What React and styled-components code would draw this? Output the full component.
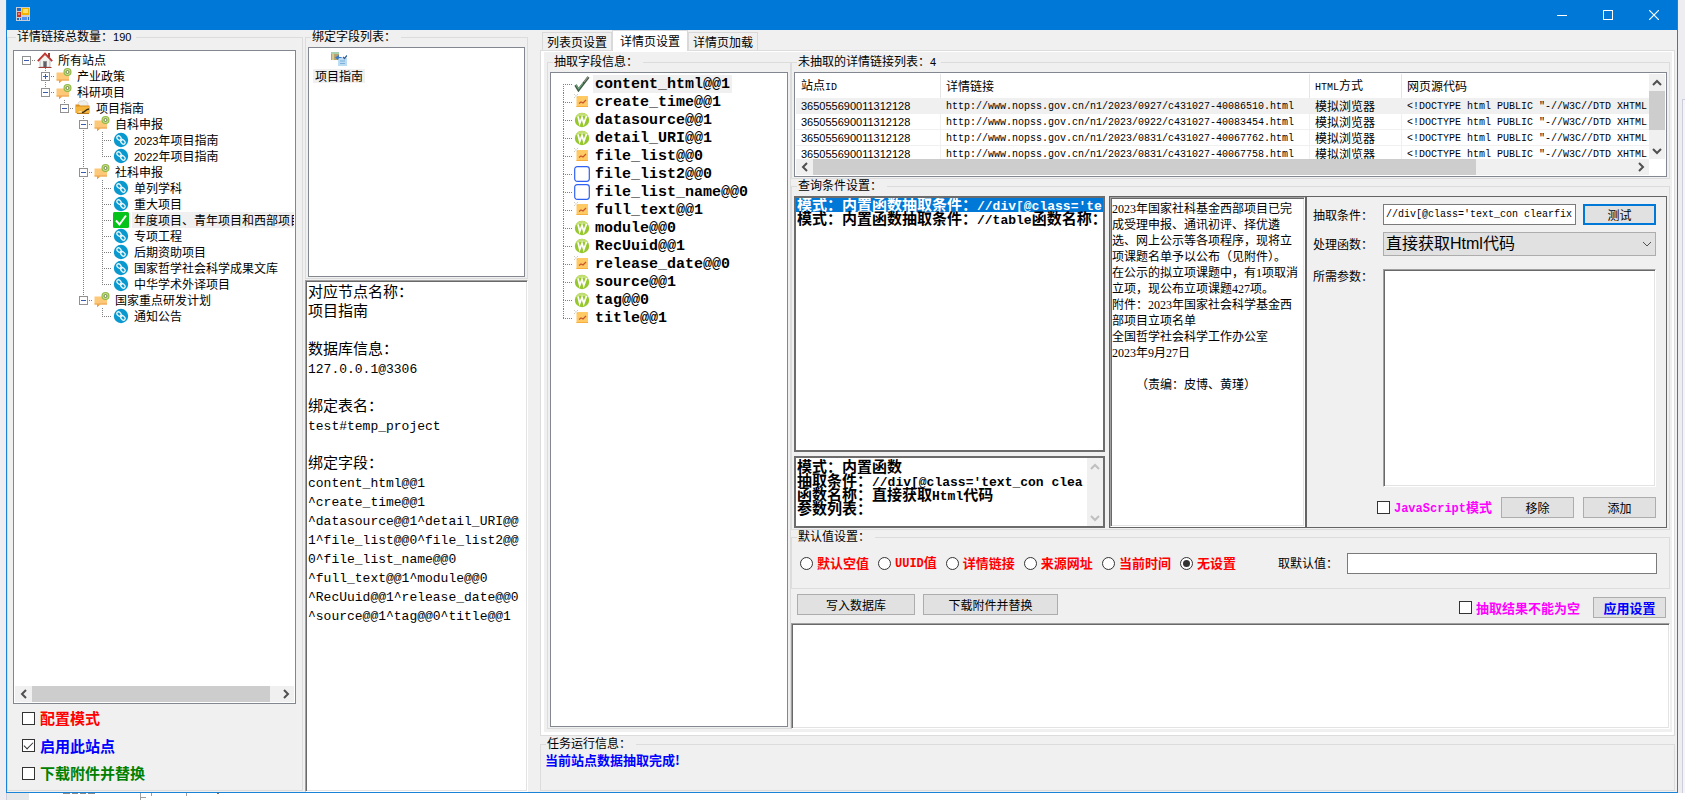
import React, { useState } from "react";
import styled, { createGlobalStyle, css } from "styled-components";

const CJK = '"Noto Sans CJK SC", sans-serif';

const GlobalStyle = createGlobalStyle`
  *, *::before, *::after { box-sizing: border-box; }
  html, body { margin: 0; padding: 0; overflow: hidden; }
  body { background: #eeeef2; color: #000; font: 12px/16px ${CJK}; }
  input, button, select, textarea { font: inherit; color: inherit; margin: 0; border-radius: 0; }
  ul, ol { list-style: none; margin: 0; padding: 0; }
`;

/* ---------- text ---------- */

const LATIN_SIZE = { 12: 10, 13: 12, 15: 13, 16: 13 };

const Latin = styled.span`
  font-family: "Liberation Mono", monospace;
  font-size: ${(p) => LATIN_SIZE[p.$size]}px;
  white-space: pre;
`;
const Digits = styled.span`
  font-family: "Liberation Sans", sans-serif;
  font-size: 11px;
`;

/* Full-width glyphs keep the parent's font, half-width runs are set at half its pitch. */
function Mixed({ size = 12, children }) {
  return String(children)
    .split(/([\x20-\x7e]+)/)
    .map((run, i) => {
      if (i % 2 === 0) return run;
      if (size === 12 && /^\d+$/.test(run)) return <Digits key={i}>{run}</Digits>;
      return <Latin key={i} $size={size}>{run}</Latin>;
    });
}

/* ---------- frame ---------- */

const Desktop = styled.div`
  height: 100vh;
  display: grid;
  grid-template-columns: 6px minmax(0, 1fr) 7px;
  grid-template-rows: minmax(0, 1fr) 7px;
`;

const WindowFrame = styled.main`
  grid-column: 2;
  display: flex;
  flex-direction: column;
  min-width: 0;
  background: #f0f0f0;
  border: 1px solid #1883d7;
  border-top: 0;
`;

const SideStrip = styled.div`
  margin: 99px 0 0 4px;
  border: solid #cccedb;
  border-width: 1px 0 0 1px;
  background: #f5f5f7;
`;

const BackStrip = styled.div`
  grid-column: 1 / -1;
  display: flex;
  background: #fff;
`;
const BackMargin = styled.div`
  width: ${(p) => p.$w}px;
  background: ${(p) => p.$bg};
  border-right: ${(p) => (p.$line ? "1px solid #cccedb" : "0")};
`;

const TitleBar = styled.header`
  height: 30px;
  flex: none;
  display: flex;
  align-items: center;
  justify-content: space-between;
  padding-left: 8px;
  background: #0078d7;
`;

const CaptionButtons = styled.div`
  display: flex;
`;
const CaptionButton = styled.button`
  width: 46px;
  height: 30px;
  padding: 0;
  border: 0;
  background: none;
  display: grid;
  place-items: center;
`;

const Body = styled.div`
  flex: 1;
  min-height: 0;
  display: flex;
`;

const Column = styled.section`
  display: flex;
  flex-direction: column;
  min-width: 0;
`;
const SiteColumn = styled(Column)`
  width: 296px;
  margin-right: 2px;
  padding-bottom: 1px;
`;
const BindColumn = styled(Column)`
  width: 223px;
  margin-right: 12px;
`;
const WorkColumn = styled(Column)`
  flex: 1;
  padding: 0 2px 1px 0;
`;

const Group = styled.fieldset`
  display: flex;
  flex-direction: column;
  min-width: 0;
  min-height: 0;
  margin: 0;
  padding: ${(p) => p.$pad || "3px 2px 1px"};
  border: 1px solid #dcdcdc;
  flex: ${(p) => (p.$h ? `0 0 ${p.$h}px` : "1")};
`;
const Legend = styled.legend`
  height: 14px;
  line-height: 12px;
  margin-left: 3px;
  padding: 0 5px 0 1px;
`;

const boxFrame = css`
  background: #fff;
  border: 1px solid #828790;
`;
const sunken = css`
  background: #fff;
  border: 1px solid;
  border-color: #a0a0a0 #fff #fff #a0a0a0;
  box-shadow: inset 1px 1px 0 #696969, inset -1px -1px 0 #e3e3e3;
`;

/* ---------- scroll bars ---------- */

const Bar = styled.div`
  flex: none;
  display: flex;
  background: #f0f0f0;
  ${(p) =>
    p.$v
      ? css`flex-direction: column; width: 16px;`
      : css`height: 16px;`}
`;
const BarEnd = styled.button`
  flex: 0 0 17px;
  padding: 0;
  border: 0;
  background: none;
  display: grid;
  place-items: center;
`;
const Track = styled.div`
  flex: 1;
  display: flex;
  flex-direction: ${(p) => (p.$v ? "column" : "row")};
`;
const Thumb = styled.div`
  background: #cdcdcd;
`;

const CHEVRONS = {
  left: "M7 1 3 5l4 4",
  right: "M3 1l4 4-4 4",
  up: "M1 7l4-4 4 4",
  down: "M1 3l4 4 4-4",
};
function Chevron({ dir, color = "#505050", width = 2 }) {
  return (
    <svg width="10" height="10" viewBox="0 0 10 10" aria-hidden="true">
      <path d={CHEVRONS[dir]} fill="none" stroke={color} strokeWidth={width} />
    </svg>
  );
}
function ScrollBar({ vertical, part, color }) {
  return (
    <Bar $v={vertical}>
      <BarEnd aria-label="back"><Chevron dir={vertical ? "up" : "left"} color={color} /></BarEnd>
      <Track $v={vertical}>
        {part ? <Thumb style={{ flexBasis: part + "%" }} /> : null}
      </Track>
      <BarEnd aria-label="forward"><Chevron dir={vertical ? "down" : "right"} color={color} /></BarEnd>
    </Bar>
  );
}

/* ---------- icons ---------- */

function Icon({ name, size = 16 }) {
  return (
    <svg width={size} height={size} viewBox="0 0 16 16" aria-hidden="true">
      {ICONS[name]}
    </svg>
  );
}

const ICONS = {
  app: (
    <>
      <rect x="1" y="0" width="14" height="14" fill="#c9ced6" />
      <rect x="2" y="1" width="4" height="3" fill="#1f66c7" />
      <rect x="2" y="5" width="4" height="5" fill="#c3332a" />
      <rect x="3" y="6" width="2" height="2" fill="#e8857a" />
      <rect x="7" y="1" width="7" height="7" fill="#f0b400" />
      <rect x="8" y="2" width="5" height="4" fill="#ffe06a" />
      <rect x="2" y="11" width="2" height="2" fill="#1f66c7" />
      <rect x="5" y="11" width="1" height="2" fill="#1f66c7" />
      <rect x="7" y="10" width="5" height="3" fill="#4f8ff0" />
      <rect x="13" y="10" width="1" height="3" fill="#1f66c7" />
    </>
  ),
  home: (
    <>
      <path d="M3 8 8 3l5 5v7H3z" fill="#f1f1ee" stroke="#9a9a9a" strokeWidth=".6" />
      <rect x="11" y="1" width="2" height="4" fill="#9a3b33" />
      <path d="M.8 9.200 8 1.600l7.200 7.600" fill="none" stroke="#b9312b" strokeWidth="1.800" />
      <path d="M3 8 8 2.700 13 8" fill="none" stroke="#ef8a80" strokeWidth=".6" />
      <rect x="6" y="9" width="4" height="6" fill="#8e8e90" />
      <rect x="7" y="10" width="2" height="5" fill="#5d6066" />
      <path d="M1.500 15.500h13" stroke="#a23c34" />
    </>
  ),
  note: (
    <>
      <path d="M.5 4.500h12.500v8H6L3 15.300V12.500H.5z" fill="#fdc878" />
      <path d="M.5 11.500h12.500v1H.5z" fill="#eaa04a" />
      <path d="M3 12.500h3l-3 2.800z" fill="#e89a3e" />
      <circle cx="11.500" cy="4" r="4" fill="#8fb944" />
      <circle cx="11.500" cy="4" r="2.900" fill="#c9e08c" />
      <circle cx="11.500" cy="4" r="1.500" fill="#fff" stroke="#55702c" strokeWidth=".8" />
    </>
  ),
  folder: (
    <>
      <path d="M3 3 5 1h3l1-1 4 3v4H3z" fill="#eeeeea" stroke="#cfcfc8" strokeWidth=".6" />
      <path d="M.5 4.500h3.500l1 1h9.500V13H.5z" fill="#d98e1f" />
      <path d="M.5 6.500h14.500L14 13.500H1.500z" fill="#f6b53c" />
      <path d="M7 12.500c3 .3 3-3 7-3.500" fill="none" stroke="#3b2c16" strokeWidth="1.500" />
      <path d="m3.500 12 3-.3" stroke="#fff3cf" />
      <path d="M2 13.500h12" stroke="#b5761a" />
    </>
  ),
  link: (
    <>
      <circle cx="8" cy="8" r="7.200" fill="#0a99cf" />
      <g transform="rotate(45 8 8)" fill="none" stroke="#e8f6fb" strokeWidth="1.300">
        <rect x="2.800" y="6.300" width="5" height="3.400" rx="1.700" />
        <rect x="8.200" y="6.300" width="5" height="3.400" rx="1.700" />
        <path d="M6.500 8h3" />
      </g>
    </>
  ),
  done: (
    <>
      <rect x="0" y="0" width="16" height="16" rx="1.500" fill="#05c31a" />
      <path d="M3 8.500 6.500 12.500 13 3.500" fill="none" stroke="#fff" strokeWidth="1.900" />
    </>
  ),
  database: (
    <>
      <path d="M0 1h8v8H0z" fill="#b7a46c" />
      <rect x="0" y="1" width="8" height="2" fill="#a9cfae" />
      <path d="M2 3v6" stroke="#e2d6a4" strokeWidth="1.500" />
      <path d="M4 6.500 8 4v2c4 0 5 2 4.500 5C11.500 9 10.500 8.500 8 8.500V10z" fill="#3a7bc8" />
      <path d="M8 7h8v8H7V9z" fill="#bcdcf2" />
      <path d="M9 10h5M9 12.500h5" stroke="#7db0dc" />
      <path d="m12 6 1.500 1.500L16 4.500" fill="none" stroke="#2f5d8f" strokeWidth="1.200" />
    </>
  ),
  tick: (
    <>
      <path d="m1.500 9 3 5L14.500 1" fill="none" stroke="#3f5c45" strokeWidth="2.600" />
      <path d="m2 9 2.700 3.800L9 7" fill="none" stroke="#6fa57c" strokeWidth="1.200" />
      <path d="M10 6 14 1" stroke="#9c9a8c" strokeWidth="1.200" />
    </>
  ),
  chart: (
    <>
      <rect x="2.500" y="2" width="11.500" height="11" fill="#ffc964" />
      <path d="M2.500 12.500H14" stroke="#f5ae3c" />
      <path d="m5 9.500 2-1.500 2 1 3-3" fill="none" stroke="#c8562a" strokeWidth="1.200" />
      <path d="m0 0 4 4M4 0 0 4" stroke="#c9c3b6" strokeWidth=".9" />
      <rect x="1.300" y="1.300" width="1.500" height="1.500" fill="#fff" />
    </>
  ),
  word: (
    <>
      <circle cx="8" cy="8" r="7.200" fill="#96c72c" />
      <path d="M1.500 5.500a7 7 0 0 1 13 0C11 3.500 5 3.500 1.500 5.500" fill="#c3df74" />
      <path d="m4 4.500 1.700 7 2.300-6 1.800 6L12.500 4" fill="none" stroke="#fff" strokeWidth="1.700" />
    </>
  ),
  blank: <rect x=".7" y=".7" width="14.600" height="14.600" rx="2.500" fill="#fff" stroke="#2f62f0" strokeWidth="1.200" />,
};

/* ---------- trees ---------- */

const TreeBox = styled.div`
  ${boxFrame}
  flex: 1;
  min-height: 0;
  display: flex;
  flex-direction: column;
  padding: 1px;
`;
const TreeRows = styled.ul`
  flex: 1;
  min-height: 0;
  overflow: hidden;
  padding: ${(p) => p.$top || 0}px 0 0 2px;
`;
const TreeRow = styled.li`
  display: flex;
  align-items: center;
  height: ${(p) => p.$h}px;
  white-space: nowrap;
  > svg { flex: none; }
`;
const IconSlot = styled.span`
  flex: none;
  width: 16px;
  height: 16px;
  margin: 0 3px 0 1px;
`;
const NodeLabel = styled.span`
  padding: 0 2px;
  line-height: 16px;
  background: ${(p) => (p.$on ? "#f0f0f0" : "none")};
`;
const FieldLabel = styled(NodeLabel)`
  padding-top: 2px;
  font: bold 15px/16px "Liberation Mono", monospace;
`;

function Guide({ h = 16, up, down, across, box }) {
  const mid = h / 2;
  const dots = { stroke: "#808080", strokeDasharray: "1 1" };
  return (
    <svg width="19" height={h} viewBox={`0 0 19 ${h}`} aria-hidden="true">
      {up && <path d={`M9.500 0V${mid}`} {...dots} />}
      {down && <path d={`M9.500 ${mid}V${h}`} {...dots} />}
      {across && <path d={`M9 ${mid + 0.5}H19`} {...dots} />}
      {box && (
        <>
          <rect x="5.500" y="4.500" width="8" height="8" fill="#fff" stroke="#919191" />
          <path d="M7 8.500h5" stroke="#3a5ba8" />
          {box === "+" && <path d="M9.500 6v5" stroke="#3a5ba8" />}
        </>
      )}
    </svg>
  );
}

/* depth, label, icon, expander, last sibling */
const SITES = [
  [0, "所有站点", "home", "-", true],
  [1, "产业政策", "note", "+", false],
  [1, "科研项目", "note", "-", true],
  [2, "项目指南", "folder", "-", true],
  [3, "自科申报", "note", "-", false],
  [4, "2023年项目指南", "link", "", false],
  [4, "2022年项目指南", "link", "", true],
  [3, "社科申报", "note", "-", false],
  [4, "单列学科", "link", "", false],
  [4, "重大项目", "link", "", false],
  [4, "年度项目、青年项目和西部项目", "done", "", false],
  [4, "专项工程", "link", "", false],
  [4, "后期资助项目", "link", "", false],
  [4, "国家哲学社会科学成果文库", "link", "", false],
  [4, "中华学术外译项目", "link", "", true],
  [3, "国家重点研发计划", "note", "-", true],
  [4, "通知公告", "link", "", true],
];

function SiteTree() {
  const open = [];
  return (
    <TreeRows role="tree">
      {SITES.map(([depth, label, icon, box, last]) => {
        open[depth] = !last;
        return (
          <TreeRow key={label} $h={16} role="treeitem">
            {Array.from({ length: depth }, (_, d) => (
              <Guide key={d} up={open[d]} down={open[d]} />
            ))}
            <Guide up={depth > 0} down={!last} across box={box} />
            <IconSlot><Icon name={icon} /></IconSlot>
            <NodeLabel $on={icon === "done"}><Mixed>{label}</Mixed></NodeLabel>
          </TreeRow>
        );
      })}
    </TreeRows>
  );
}

const FIELDS = [
  ["content_html@@1", "tick"],
  ["create_time@@1", "chart"],
  ["datasource@@1", "word"],
  ["detail_URI@@1", "word"],
  ["file_list@@0", "chart"],
  ["file_list2@@0", "blank"],
  ["file_list_name@@0", "blank"],
  ["full_text@@1", "chart"],
  ["module@@0", "word"],
  ["RecUuid@@1", "word"],
  ["release_date@@0", "chart"],
  ["source@@1", "word"],
  ["tag@@0", "word"],
  ["title@@1", "chart"],
];

function FieldTree() {
  return (
    <TreeRows role="tree" $top={1}>
      {FIELDS.map(([label, icon], i) => (
        <TreeRow key={label} $h={18} role="treeitem">
          <Guide h={18} up={i > 0} down={i < FIELDS.length - 1} across />
          <IconSlot><Icon name={icon} /></IconSlot>
          <FieldLabel $on={i === 0}>{label}</FieldLabel>
        </TreeRow>
      ))}
    </TreeRows>
  );
}

/* ---------- controls ---------- */

const Option = styled.label`
  display: flex;
  align-items: center;
  gap: ${(p) => p.$gap || 4}px;
  white-space: nowrap;
  color: ${(p) => p.$color};
  font-size: ${(p) => p.$size || 13}px;
  font-weight: bold;
  line-height: 18px;
`;
const CheckBox = styled.input.attrs({ type: "checkbox" })`
  appearance: none;
  flex: none;
  width: 13px;
  height: 13px;
  display: grid;
  place-items: center;
  background: #fff;
  border: 1px solid #333;
  &:checked::after {
    content: "";
    width: 9px;
    height: 5px;
    margin-bottom: 3px;
    border: solid #333;
    border-width: 0 0 1px 1px;
    transform: rotate(-45deg);
  }
`;
const Radio = styled.input.attrs({ type: "radio" })`
  appearance: none;
  flex: none;
  width: 13px;
  height: 13px;
  display: grid;
  place-items: center;
  background: #fff;
  border: 1px solid #333;
  border-radius: 50%;
  &:checked::after {
    content: "";
    width: 7px;
    height: 7px;
    border-radius: 50%;
    background: #333;
  }
`;
const Button = styled.button`
  flex: none;
  width: ${(p) => p.$w || 73}px;
  height: 21px;
  padding: 0;
  line-height: 16px;
  background: #e1e1e1;
  border: 1px solid #adadad;
  ${(p) => p.$focused && css`border: 2px solid #0078d7;`}
  ${(p) => p.$strong && css`color: #00f; font-weight: bold; font-size: 13px;`}
`;
const TextBox = styled.input.attrs({ type: "text" })`
  flex: 1;
  min-width: 0;
  height: 21px;
  padding: 0 2px;
  background: #fff;
  border: 1px solid #7a7a7a;
  font: 10px/16px "Liberation Mono", monospace;
`;
const TextArea = styled.textarea`
  ${sunken}
  display: block;
  flex: 1;
  min-width: 0;
  min-height: 0;
  resize: none;
  outline: 0;
  padding: 2px 3px;
  overflow: hidden;
`;

const Switches = styled.div`
  flex: none;
  height: 86px;
  display: flex;
  flex-direction: column;
  justify-content: space-between;
  padding: 5px 9px 8px;
`;

/* ---------- binding column ---------- */

const ItemList = styled.ul`
  ${boxFrame}
  flex: 1;
  padding: 3px 4px;
`;
const ItemTile = styled.li`
  width: 52px;
  display: flex;
  flex-direction: column;
  align-items: center;
  gap: 2px;
  svg { display: block; }
  span { line-height: 14px; padding: 0 2px; background: #f0f0f0; white-space: nowrap; }
`;
const BindInfo = styled.div`
  ${sunken}
  flex: 1;
  margin-top: 1px;
  padding: 0 3px 0 2px;
  overflow: hidden;
  font-size: 15px;
  line-height: 19px;
`;
const InfoLine = styled.div`
  height: 19px;
  white-space: nowrap;
`;

const BIND_LINES = [
  "对应节点名称：",
  "项目指南",
  "",
  "数据库信息：",
  "127.0.0.1@3306",
  "",
  "绑定表名：",
  "test#temp_project",
  "",
  "绑定字段：",
  "content_html@@1",
  "^create_time@@1",
  "^datasource@@1^detail_URI@@",
  "1^file_list@@0^file_list2@@",
  "0^file_list_name@@0",
  "^full_text@@1^module@@0",
  "^RecUuid@@1^release_date@@0",
  "^source@@1^tag@@0^title@@1",
];

/* ---------- tabs ---------- */

const TabStrip = styled.div`
  flex: none;
  height: 20px;
  display: flex;
  align-items: flex-end;
  padding-left: 2px;
`;
const Tab = styled.button`
  position: relative;
  height: ${(p) => (p.$on ? 21 : 18)}px;
  width: ${(p) => (p.$on ? 76 : 70)}px;
  margin-bottom: ${(p) => (p.$on ? -1 : 0)}px;
  padding: 0;
  line-height: 16px;
  white-space: nowrap;
  background: ${(p) => (p.$on ? "#fff" : "#f0f0f0")};
  border: 1px solid #d9d9d9;
  border-bottom: 0;
`;
const TabPage = styled.div`
  flex: 1;
  min-height: 0;
  display: flex;
  margin-bottom: 1px;
  background: #fff;
  border: 1px solid #dcdcdc;
  padding: 1px 2px 3px 3px;
`;
const PageInner = styled.div`
  flex: 1;
  min-width: 0;
  display: flex;
  padding: 3px 2px 3px 3px;
  background: #f0f0f0;
`;
const FieldPane = styled.div`
  flex: 0 0 244px;
  display: flex;
`;
const DetailPane = styled.div`
  flex: 1;
  min-width: 0;
  display: flex;
  flex-direction: column;
`;

/* ---------- link table ---------- */

const TableBox = styled.div`
  ${boxFrame}
  flex: 1;
  min-height: 0;
  display: grid;
  grid-template-columns: minmax(0, 1fr) 16px;
  grid-template-rows: minmax(0, 1fr) 16px;
  padding: 1px;
`;
const TableClip = styled.div`
  overflow: hidden;
`;
const Table = styled.table`
  width: 100%;
  table-layout: fixed;
  border-collapse: separate;
  border-spacing: 0;
  th, td {
    padding: 0 0 0 5px;
    overflow: hidden;
    white-space: nowrap;
    text-align: left;
    vertical-align: middle;
    font-weight: normal;
    line-height: 12px;
    border-right: 1px solid #e5e5e5;
  }
  th { height: 24px; }
  td { height: 16px; border-bottom: 1px solid #f0f0f0; border-right-color: #f0f0f0; }
  th:last-child, td:last-child { border-right: 0; }
`;
const LinkRow = styled.tr`
  background: ${(p) => (p.$on ? "#f0f0f0" : "#fff")};
`;
const LINKS = ["0927/c431027-40086510", "0922/c431027-40083454", "0831/c431027-40067762", "0831/c431027-40067758"];

/* ---------- query conditions ---------- */

const Split = styled.div`
  flex: 1;
  min-height: 0;
  display: grid;
  grid-template-columns: 311fr 4px 196fr 362fr;
  grid-template-rows: minmax(0, 1fr);
`;
const RuleColumn = styled.div`
  min-width: 0;
  display: flex;
  flex-direction: column;
  gap: 4px;
`;
const darkFrame = css`
  background: #fff;
  border: 2px solid #6c6c6c;
`;
const RuleList = styled.ul`
  ${darkFrame}
  flex: 1;
  min-height: 0;
  overflow: hidden;
`;
const Rule = styled.li`
  height: 14px;
  padding-left: 1px;
  white-space: nowrap;
  font-size: 15px;
  font-weight: bold;
  line-height: 12px;
  color: ${(p) => (p.$on ? "#fff" : "#000")};
  background: ${(p) => (p.$on ? "#0078d7" : "none")};
`;
const RuleDetail = styled.div`
  ${darkFrame}
  flex: 0 0 72px;
  display: flex;
`;
const RuleLines = styled.ul`
  flex: 1;
  min-width: 0;
  padding-top: 2px;
  overflow: hidden;
`;
const PreviewFrame = styled.div`
  grid-column: 3;
  min-width: 0;
  display: flex;
  border: 1px solid #646464;
  border-right: 0;
`;
const Preview = styled(TextArea)`
  padding: 3px 0 2px 1px;
  font: 12px/16px "Liberation Serif", ${CJK};
  white-space: pre;
`;
const Form = styled.div`
  min-width: 0;
  display: flex;
  flex-direction: column;
  padding: 7px 10px 9px 6px;
  border: 1px solid #646464;
  border-left-width: 2px;
`;
const FormRow = styled.div`
  display: flex;
  gap: ${(p) => p.$gap || 0}px;
  margin-bottom: ${(p) => p.$after || 0}px;
  flex: ${(p) => (p.$grow ? 1 : "none")};
  min-width: 0;
  min-height: 0;
  justify-content: ${(p) => (p.$end ? "flex-end" : "normal")};
`;
const FormLabel = styled.label`
  flex: 0 0 70px;
  line-height: ${(p) => p.$lh || 21}px;
`;
const SelectWrap = styled.div`
  position: relative;
  flex: 1;
  display: flex;
  svg { position: absolute; right: 4px; top: 7px; pointer-events: none; }
`;
const Select = styled.select`
  appearance: none;
  flex: 1;
  height: 24px;
  padding: 0 20px 0 2px;
  background: #e1e1e1;
  border: 1px solid #adadad;
  font: 16px/22px "Liberation Sans", ${CJK};
`;

const PREVIEW = `2023年国家社科基金西部项目已完
成受理申报、通讯初评、择优遴
选、网上公示等各项程序，现将立
项课题名单予以公布（见附件）。
在公示的拟立项课题中，有1项取消
立项，现公布立项课题427项。
附件：2023年国家社会科学基金西
部项目立项名单
全国哲学社会科学工作办公室
2023年9月27日

        （责编：皮博、黄瑾）`;

/* ---------- defaults and actions ---------- */

const DefaultRow = styled.div`
  flex: 1;
  display: flex;
  align-items: center;
  gap: 9px;
  padding: 0 10px 8px 6px;
`;
const DefaultLabel = styled.label`
  margin: 0 0 0 33px;
  white-space: nowrap;
`;
const Actions = styled.div`
  flex: none;
  height: 34px;
  display: flex;
  align-items: flex-start;
  padding: 5px 4px 0 6px;
  gap: 8px;
`;
const ActionsEnd = styled.div`
  margin: 3px 0 0 auto;
  display: flex;
  gap: 13px;
`;
const Status = styled.output`
  padding-left: 2px;
  color: #00f;
  font-size: 13px;
  font-weight: bold;
  line-height: 18px;
`;

const DEFAULTS = ["默认空值", "UUID值", "详情链接", "来源网址", "当前时间", "无设置"];

export default function App() {
  const [choice, setChoice] = useState("无设置");
  return (
    <Desktop>
      <GlobalStyle />
      <WindowFrame>
        <TitleBar>
          <Icon name="app" />
          <CaptionButtons>
            <CaptionButton aria-label="minimize">
              <svg width="10" height="10"><path d="M0 5.500h10" stroke="#fff" /></svg>
            </CaptionButton>
            <CaptionButton aria-label="maximize">
              <svg width="10" height="10"><rect x=".5" y=".5" width="9" height="9" fill="none" stroke="#fff" /></svg>
            </CaptionButton>
            <CaptionButton aria-label="close">
              <svg width="10" height="10"><path d="m0 0 10 10M10 0 0 10" stroke="#fff" strokeWidth="1.200" /></svg>
            </CaptionButton>
          </CaptionButtons>
        </TitleBar>

        <Body>
          <SiteColumn>
            <Group $pad="6px 6px 0 5px">
              <Legend><Mixed>详情链接总数量：190</Mixed></Legend>
              <TreeBox>
                <SiteTree />
                <ScrollBar part={97} />
              </TreeBox>
              <Switches>
                <Option $size={15} $gap={5} $color="#f00"><CheckBox />配置模式</Option>
                <Option $size={15} $gap={5} $color="#00f"><CheckBox defaultChecked />启用此站点</Option>
                <Option $size={15} $gap={5} $color="#008000"><CheckBox />下载附件并替换</Option>
              </Switches>
            </Group>
          </SiteColumn>

          <BindColumn>
            <Group $h={249}>
              <Legend>绑定字段列表：</Legend>
              <ItemList>
                <ItemTile><Icon name="database" /><span>项目指南</span></ItemTile>
              </ItemList>
            </Group>
            <BindInfo>
              {BIND_LINES.map((line, i) => (
                <InfoLine key={i}><Mixed size={15}>{line}</Mixed></InfoLine>
              ))}
            </BindInfo>
          </BindColumn>

          <WorkColumn>
            <TabStrip role="tablist">
              <Tab role="tab">列表页设置</Tab>
              <Tab role="tab" aria-selected="true" $on>详情页设置</Tab>
              <Tab role="tab">详情页加载</Tab>
            </TabStrip>
            <TabPage>
              <PageInner>
                <FieldPane>
                  <Group>
                    <Legend>抽取字段信息：</Legend>
                    <TreeBox><FieldTree /></TreeBox>
                  </Group>
                </FieldPane>

                <DetailPane>
                  <Group $h={124}>
                    <Legend><Mixed>未抽取的详情链接列表：4</Mixed></Legend>
                    <TableBox>
                      <TableClip>
                        <Table>
                          <colgroup>
                            <col style={{ width: 145 }} />
                            <col style={{ width: 369 }} />
                            <col style={{ width: 92 }} />
                            <col />
                          </colgroup>
                          <thead>
                            <tr>
                              <th><Mixed>站点ID</Mixed></th>
                              <th>详情链接</th>
                              <th><Mixed>HTML方式</Mixed></th>
                              <th>网页源代码</th>
                            </tr>
                          </thead>
                          <tbody>
                            {LINKS.map((path, i) => (
                              <LinkRow key={path} $on={i === 0}>
                                <td><Mixed>365055690011312128</Mixed></td>
                                <td><Mixed>{`http://www.nopss.gov.cn/n1/2023/${path}.html`}</Mixed></td>
                                <td>模拟浏览器</td>
                                <td><Mixed>{'<!DOCTYPE html PUBLIC "-//W3C//DTD XHTML'}</Mixed></td>
                              </LinkRow>
                            ))}
                          </tbody>
                        </Table>
                      </TableClip>
                      <ScrollBar vertical part={76} />
                      <ScrollBar part={81} />
                    </TableBox>
                  </Group>

                  <Group $h={351}>
                    <Legend>查询条件设置：</Legend>
                    <Split>
                      <RuleColumn>
                        <RuleList role="listbox" aria-label="查询条件">
                          <Rule role="option" $on><Mixed size={15}>{"模式：内置函数抽取条件：//div[@class='te"}</Mixed></Rule>
                          <Rule role="option"><Mixed size={15}>{"模式：内置函数抽取条件：//table函数名称："}</Mixed></Rule>
                        </RuleList>
                        <RuleDetail>
                          <RuleLines>
                            <Rule>模式：内置函数</Rule>
                            <Rule><Mixed size={15}>{"抽取条件：//div[@class='text_con clea"}</Mixed></Rule>
                            <Rule><Mixed size={15}>函数名称：直接获取Html代码</Mixed></Rule>
                            <Rule>参数列表：</Rule>
                          </RuleLines>
                          <ScrollBar vertical color="#bfbfbf" />
                        </RuleDetail>
                      </RuleColumn>
                      <PreviewFrame>
                        <Preview aria-label="抽取结果" defaultValue={PREVIEW} />
                      </PreviewFrame>
                      <Form>
                        <FormRow $after={7}>
                          <FormLabel htmlFor="rule">抽取条件：</FormLabel>
                          <FormRow $gap={7} $grow>
                            <TextBox id="rule" defaultValue="//div[@class='text_con clearfix" />
                            <Button $focused>测试</Button>
                          </FormRow>
                        </FormRow>
                        <FormRow $after={13}>
                          <FormLabel htmlFor="handler" $lh={24}>处理函数：</FormLabel>
                          <SelectWrap>
                            <Select id="handler"><option>直接获取Html代码</option></Select>
                            <Chevron dir="down" width={1} />
                          </SelectWrap>
                        </FormRow>
                        <FormRow $after={10} $grow>
                          <FormLabel htmlFor="params" $lh={14}>所需参数：</FormLabel>
                          <TextArea id="params" />
                        </FormRow>
                        <FormRow $gap={9} $end>
                          <Option $color="#f0f"><CheckBox /><span><Mixed size={13}>JavaScript模式</Mixed></span></Option>
                          <Button>移除</Button>
                          <Button>添加</Button>
                        </FormRow>
                      </Form>
                    </Split>
                  </Group>

                  <Group $h={59}>
                    <Legend>默认值设置：</Legend>
                    <DefaultRow>
                      {DEFAULTS.map((name) => (
                        <Option key={name} $color="#f00">
                          <Radio name="default" checked={choice === name} onChange={() => setChoice(name)} />
                          <span><Mixed size={13}>{name}</Mixed></span>
                        </Option>
                      ))}
                      <DefaultLabel htmlFor="default-value">取默认值：</DefaultLabel>
                      <TextBox id="default-value" />
                    </DefaultRow>
                  </Group>

                  <Actions>
                    <Button $w={118}>写入数据库</Button>
                    <Button $w={135}>下载附件并替换</Button>
                    <ActionsEnd>
                      <Option $color="#f0f"><CheckBox />抽取结果不能为空</Option>
                      <Button $strong>应用设置</Button>
                    </ActionsEnd>
                  </Actions>
                  <TextArea aria-label="输出" />
                </DetailPane>
              </PageInner>
            </TabPage>

            <Group $h={54} $pad="0 2px">
              <Legend>任务运行信息：</Legend>
              <Status>当前站点数据抽取完成!</Status>
            </Group>
          </WorkColumn>
        </Body>
      </WindowFrame>
      <SideStrip />
      <BackStrip>
        <BackMargin $w={7} $bg="#eeeef2" $line />
        <BackMargin $w={22} $bg="#e6e7e8" />
        <svg width="200" height="7" aria-hidden="true">
          <path d="M34 .5h7M43 .5h6M51 .5h6M59 .5h7" stroke="#8a8a8a" />
          <path d="M111.500 0v7M111 4.500h6M122.500 0v3M157.500 0v3" fill="none" stroke="#a0a0a0" />
          <path d="M188 .5h2" stroke="#8a6a4a" />
        </svg>
      </BackStrip>
    </Desktop>
  );
}
